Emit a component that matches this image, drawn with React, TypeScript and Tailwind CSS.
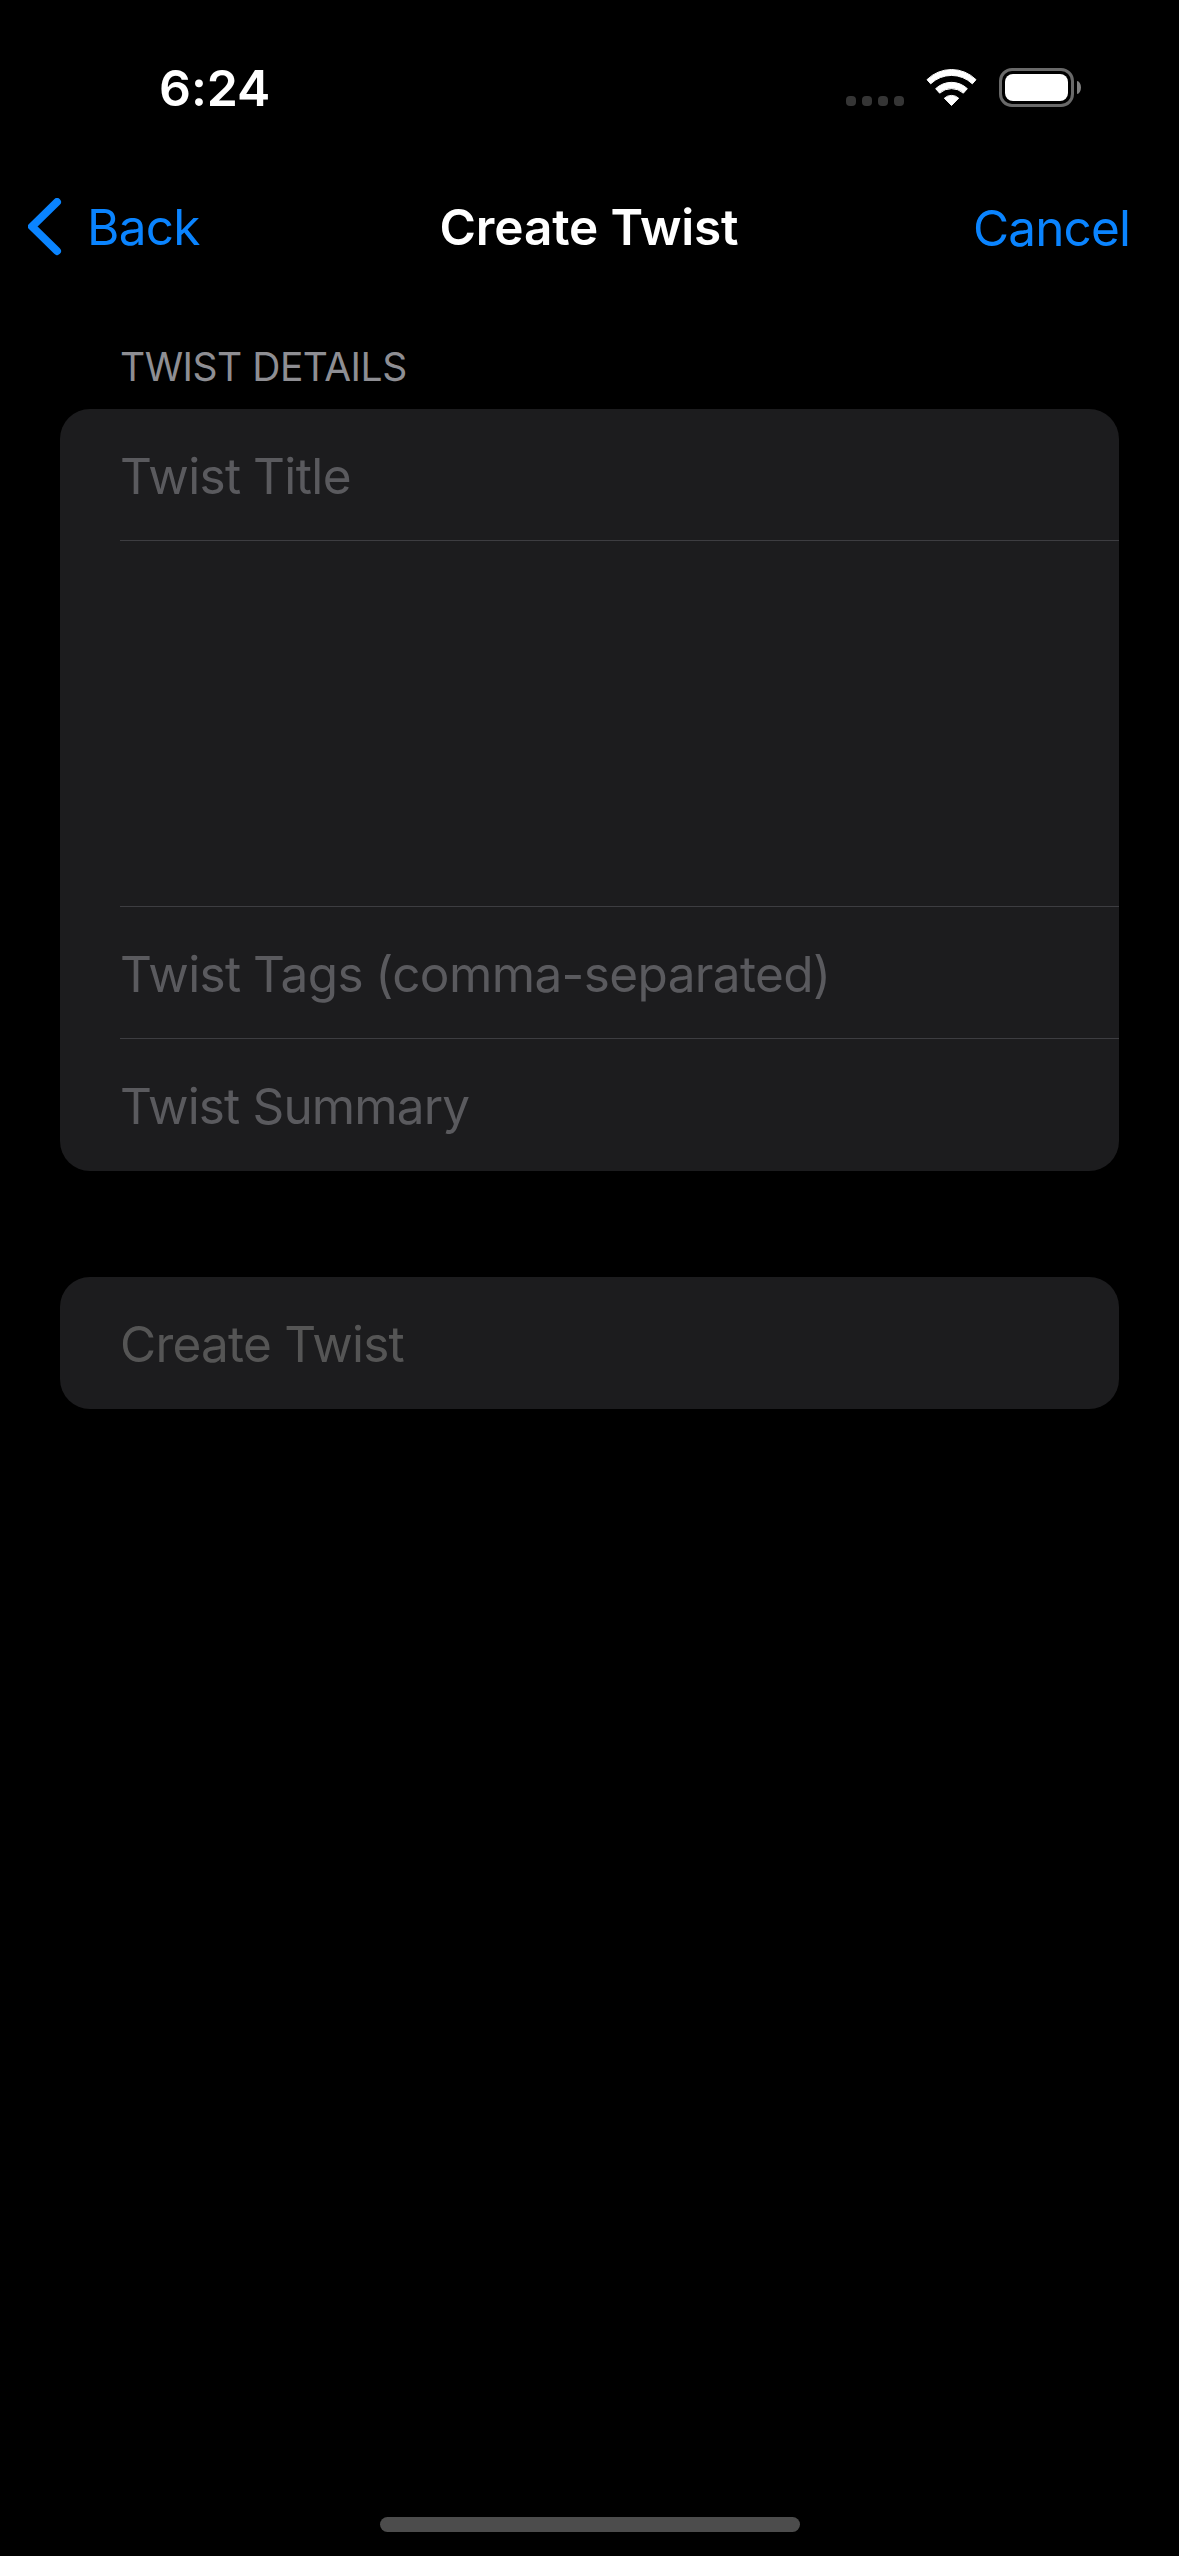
import React from "react";

function SignalDots() {
  return (
    <div className="mb-px flex gap-[6px]">
      <div className="size-[10px] rounded-[4px] bg-[#353535]" />
      <div className="size-[10px] rounded-[4px] bg-[#353535]" />
      <div className="size-[10px] rounded-[4px] bg-[#353535]" />
      <div className="size-[10px] rounded-[4px] bg-[#353535]" />
    </div>
  );
}

function WifiIcon() {
  return (
    <svg
      className="ml-[21px] h-[39px] w-[53px]"
      viewBox="315 84 159 117"
      fill="#fff"
      stroke="#fff"
      strokeWidth="3"
      strokeLinejoin="round"
    >
      <path d="M321 119 A104 104 0 0 1 468 119 L457 131.5 A90 90 0 0 0 332 131.5 Z" />
      <path d="M347 146 A69 69 0 0 1 442 146 L430 159.5 A53 53 0 0 0 359 159.5 Z" />
      <path d="M373 174.5 A32 32 0 0 1 416 174.5 L394.5 196.5 Z" />
    </svg>
  );
}

function Battery() {
  return (
    <div className="ml-[21px] flex items-center gap-[3px]">
      <div className="h-[39px] w-[75px] rounded-[13px] border-[3px] border-[#696969] p-[3px]">
        <div className="h-full w-full rounded-[8px] bg-white" />
      </div>
      <div className="h-[13px] w-[4px] bg-[#808080] [border-radius:0_4px_4px_0/0_6.5px_6.5px_0]" />
    </div>
  );
}

function StatusBar() {
  return (
    <div className="flex h-[175px] items-center justify-between pl-[159px] pr-[98px]">
      <div className="pt-px text-[50px] font-semibold leading-[60px] tracking-[-0.1px] text-white">
        6:24
      </div>
      <div className="flex h-[39px] items-end">
        <SignalDots />
        <WifiIcon />
        <Battery />
      </div>
    </div>
  );
}

function NavBar() {
  return (
    <div className="grid h-[104px] grid-cols-[1fr_auto_1fr] items-center text-[49.5px] leading-[60px] text-[#0a84ff]">
      <div className="flex items-center pl-[28px]">
        <svg
          className="h-[58px] w-[34px]"
          viewBox="0 0 34 58"
          fill="none"
          stroke="currentColor"
          strokeWidth="8"
          strokeLinecap="round"
          strokeLinejoin="round"
        >
          <path d="M29 4 L4 28.5 L29 53" />
        </svg>
        <span className="ml-[25px] tracking-[-0.75px]">Back</span>
      </div>
      <h1 className="pr-px font-semibold tracking-[-0.15px] text-white">
        Create Twist
      </h1>
      <div className="flex justify-end pr-[49px] pt-[2px] tracking-[-0.9px]">
        Cancel
      </div>
    </div>
  );
}

export default function App() {
  return (
    <div className="flex h-[2556px] w-[1179px] flex-col bg-black font-['Inter','Liberation_Sans',sans-serif]">
      <StatusBar />
      <NavBar />
      <main className="flex flex-1 flex-col px-[60px] text-[49.5px] leading-[60px] text-[#5a5a5e]">
        <h2 className="mb-[14px] mt-[59px] pl-[60px] text-[39px] leading-[57px] tracking-[-0.5px] text-[#8e8e93]">
          TWIST DETAILS
        </h2>
        <section className="rounded-[30px] bg-[#1c1c1e] pl-[60px]">
          <div className="flex h-[132px] items-center border-b border-[#3d3d41] pt-[2px] tracking-[-0.6px] [word-spacing:-1px]">
            Twist Title
          </div>
          <div className="h-[366px] border-b border-[#3d3d41]" />
          <div className="flex h-[132px] items-center border-b border-[#3d3d41] pt-[2px] tracking-[-0.62px] [word-spacing:-1px]">
            Twist Tags (comma-separated)
          </div>
          <div className="flex h-[132px] items-center pt-[2px] tracking-[-0.85px]">
            Twist Summary
          </div>
        </section>
        <section className="mt-[106px] flex h-[132px] items-center rounded-[30px] bg-[#1c1c1e] pl-[60px] pt-[2px] tracking-[-0.78px] text-[#555555]">
          Create Twist
        </section>
      </main>
      <div className="mx-auto mb-[24px] h-[15px] w-[420px] rounded-full bg-[#4c4c4c]" />
    </div>
  );
}
